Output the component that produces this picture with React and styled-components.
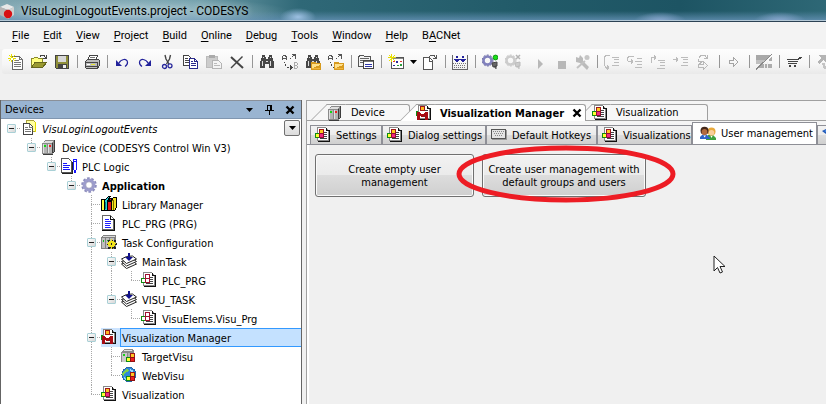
import React, { useState } from 'react'
import styled, { createGlobalStyle } from 'styled-components'

const GlobalStyle = createGlobalStyle`
  * {
    box-sizing: border-box;
  }

  body {
    margin: 0;
    background: #f0f0f0;
    color: #000;
    font-family: 'DejaVu Sans Condensed', 'DejaVu Sans', sans-serif;
    font-size: 11px;
    overflow: hidden;
  }

  button {
    margin: 0;
    padding: 0;
    border: none;
    background: none;
    color: inherit;
    font: inherit;
  }
`

const StyledWindow = styled.div`
  display: flex;
  flex-direction: column;
  min-height: 100vh;
`

const StyledTitleBar = styled.header`
  display: flex;
  align-items: center;
  gap: 5px;
  height: 22px;
  border-bottom: 1px solid #2c4254;
  box-shadow: inset 0 -1px #b4c8d6;
  font-family: Roboto, 'Open Sans', sans-serif;
  font-size: 12px;
  text-shadow: 0 0 6px rgba(255, 255, 255, 0.5);
  background:
    radial-gradient(ellipse 18px 9px at 298px 17px, #9dc0e2, transparent),
    radial-gradient(ellipse 26px 9px at 660px 21px, #8ba9d0, transparent),
    radial-gradient(ellipse 26px 9px at 780px 21px, #8ba9d0, transparent),
    radial-gradient(ellipse 160px 16px at 130px 12px, rgba(190, 214, 222, 0.7), transparent),
    linear-gradient(to bottom, transparent 11px, rgba(100, 145, 180, 0.8) 20px),
    linear-gradient(to right, #7fa5b0, #6d9ca8 200px, #2f6877 300px, #225b69 520px, #1d5463 680px, #2e6876);
`

const StyledMenu = styled.nav`
  display: flex;
  gap: 14px;
  height: 27px;
  padding-left: 12px;
  align-items: center;
  background: #f3f3f3;
  font-family: Roboto, 'Open Sans', sans-serif;
  font-size: 11px;
`

const StyledAccessKey = styled.u`
  text-decoration-thickness: 1px;
  text-underline-offset: 2px;
  text-decoration-skip-ink: none;
`

const StyledToolbar = styled.div`
  display: flex;
  align-items: center;
  height: 25px;
  margin-left: 2px;
  padding-left: 6px;
  border-radius: 3px 0 0 3px;
  background: linear-gradient(to bottom, #fdfdfd, #f6f6f6 60%, #e9e9e9);
  overflow: hidden;
`

const StyledTool = styled.button`
  display: flex;
  flex: none;
  align-items: center;
  gap: 6px;
  width: ${({ $split }) => ($split ? '34px' : '23px')};
  height: 16px;
`

const StyledSeparator = styled.i`
  flex: none;
  width: 7px;
  height: 13px;
  border-left: 1px solid #969696;
`

const StyledWorkspace = styled.main`
  display: flex;
  flex: 1;
  gap: 4px;
  padding-top: 26px;
`

const StyledDevices = styled.aside`
  position: relative;
  flex: 0 0 302px;
  border: solid #646464;
  border-width: 0 1px;
  background: #fff;
`

const StyledDevicesHeader = styled.div`
  display: flex;
  align-items: center;
  height: 19px;
  padding: 0 6px 0 4px;
  border-top: 1px solid #8a9099;
  border-bottom: 1px solid #8096b0;
  background: #99b4d1;

  h2 {
    flex: 1;
    margin: 0;
    font-size: 11px;
    font-weight: normal;
  }
`

const StyledHeaderButton = styled.button`
  display: flex;
  justify-content: center;
  width: 20px;

  &:last-child {
    width: 10px;
    margin-left: 6px;
  }
`

const StyledFilterButton = styled.button`
  position: absolute;
  top: 20px;
  right: 1px;
  display: flex;
  align-items: center;
  justify-content: center;
  width: 16px;
  height: 16px;
  border: 1px solid #707070;
  border-radius: 2px;
  background: linear-gradient(#f4f4f4, #dcdcdc);
`

const StyledTreeRow = styled.div`
  display: flex;
  height: 19px;
`

const dotsY = 'repeating-linear-gradient(to bottom, #a8a8a8 0 1px, transparent 1px 2px)'
const dotsX = 'repeating-linear-gradient(to right, #a8a8a8 0 1px, transparent 1px 2px)'

const lines = {
  none: 'none',
  pass: `${dotsY} 10px 0 / 1px 100% no-repeat`,
  root: `${dotsX} 10px 9px / 10px 1px no-repeat`,
  last: `${dotsY} 10px 0 / 1px 10px no-repeat, ${dotsX} 10px 9px / 10px 1px no-repeat`,
  tee: `${dotsY} 10px 0 / 1px 100% no-repeat, ${dotsX} 10px 9px / 10px 1px no-repeat`,
}

const StyledGuide = styled.div`
  display: flex;
  flex: none;
  width: 20px;
  padding: 5px 0 0 6px;
  background: ${({ $line }) => lines[$line]};
`

const StyledExpander = styled.button`
  width: 9px;
  height: 9px;
  border: 1px solid #a9d0d6;
  border-radius: 1px;
  background: linear-gradient(#222, #222) center / 5px 1px no-repeat,
    linear-gradient(135deg, #fff, #d6d6d6);
`

const StyledTreeIcon = styled.div`
  flex: none;
  width: 19px;
  padding-top: 1px;
  background: ${({ $selected }) => ($selected ? '#cce4ff' : 'none')};
`

const StyledTreeLabel = styled.div`
  flex: 1;
  padding-left: 1px;
  border: 1px solid ${({ $selected }) => ($selected ? '#3399ff' : 'transparent')};
  border-right: none;
  background: ${({ $selected }) => ($selected ? '#c4e1ff' : 'none')};
  font-weight: ${({ $bold }) => ($bold ? 'bold' : 'normal')};
  font-style: ${({ $italic }) => ($italic ? 'italic' : 'normal')};
  line-height: 19px;
  white-space: nowrap;
`

const StyledEditor = styled.section`
  position: relative;
  display: flex;
  flex: 1;
  flex-direction: column;
  min-width: 0;
  border: solid #a0a0a0;
  border-width: 1px 0 0 1px;
`

const StyledDocTabs = styled.div`
  display: flex;
  flex: none;
  gap: 6px;
  height: 20px;
  padding: 3px 0 0 20px;
  background: linear-gradient(#a0a0a0, #a0a0a0) bottom / 100% 1px no-repeat, #f5f5f5;
`

const StyledDocTab = styled.button`
  position: relative;
  z-index: ${({ $active }) => ($active ? 2 : 1)};
  display: flex;
  align-items: center;
  gap: 8px;
  width: ${({ $width }) => $width}px;
  height: ${({ $active }) => ($active ? '17px' : '16px')};
  padding-right: 4px;
  border: solid #a0a0a0;
  border-width: 1px 1px 0 0;
  border-radius: 0 3px 0 0;
  background: ${({ $active }) => ($active ? '#fff' : '#f7f7f7')};
  font-weight: ${({ $active }) => ($active ? 'bold' : 'normal')};
  white-space: nowrap;

  &::before {
    content: '';
    position: absolute;
    z-index: -1;
    top: -1px;
    bottom: 0;
    left: -8px;
    width: 18px;
    border: solid #a0a0a0;
    border-width: 1px 0 0 1px;
    background: inherit;
    transform: skewX(-45deg);
  }

  svg {
    flex: none;
  }
`

const StyledDocLabel = styled.span`
  flex: 1;
  text-align: left;
`

const StyledPageTabs = styled.div`
  display: flex;
  flex: none;
  align-items: flex-end;
  height: 24px;
  padding-left: 3px;
  border-bottom: 1px solid #8e8f96;
  background: #f5f5f5;
  overflow: hidden;
`

const StyledPageTab = styled.button`
  display: flex;
  flex: none;
  align-items: center;
  gap: 5px;
  width: ${({ $width }) => $width}px;
  height: ${({ $active }) => ($active ? '22px' : '19px')};
  padding-left: ${({ $active }) => ($active ? '7px' : '4px')};
  border: solid #8e8f96;
  border-width: 1px 1px 0;
  background: ${({ $active }) =>
    $active ? '#fff' : 'linear-gradient(#f2f2f2, #ebebeb 50%, #dcdcdc 51%, #cfcfcf)'};
  white-space: nowrap;
`

const StyledPage = styled.div`
  display: flex;
  flex: 1;
  align-items: flex-start;
  gap: 8px;
  padding: 9px 6px;
  border-left: 2px solid #fff;
`

const StyledAction = styled.button`
  width: ${({ $width }) => $width}px;
  height: 43px;
  padding: 0 4px;
  border: 1px solid #707070;
  border-radius: 3px;
  box-shadow: inset 0 0 0 1px #fafafa;
  background: linear-gradient(#f2f2f2, #ebebeb 48%, #dddddd 49%, #cfcfcf);
  line-height: 13px;
`

const StyledHighlighted = styled.div`
  position: relative;

  > svg {
    position: absolute;
    top: -9px;
    left: -26px;
    pointer-events: none;
  }
`

const StyledPointer = styled.svg`
  position: absolute;
  top: 154px;
  left: 406px;
`

const Icon = ({ children, smooth, size = 16 }) => (
  <svg
    width={size}
    height={size}
    viewBox={`0 0 ${size} ${size}`}
    fill="none"
    shapeRendering={smooth ? 'auto' : 'crispEdges'}
    aria-hidden="true"
  >
    {children}
  </svg>
)

const Caret = () => (
  <svg width="7" height="4" viewBox="0 0 7 4" aria-hidden="true">
    <path d="M0 0h7L3.500 4z" fill="#000" />
  </svg>
)

const Cross = () => (
  <svg width="10" height="10" viewBox="0 0 10 10" aria-hidden="true">
    <path d="M1.500 1.500l7 7M8.500 1.500l-7 7" stroke="#000" strokeWidth="2.400" />
  </svg>
)

const Pin = () => (
  <svg width="9" height="11" viewBox="0 0 9 11" shapeRendering="crispEdges" aria-hidden="true">
    <path d="M2 1.500h5M2.500 1v6M6.500 1v6M5.500 1v6M0 6.500h9M4.500 7v4" stroke="#000" fill="none" />
  </svg>
)

/* ---------- toolbar icons ---------- */

const NewIcon = () => (
  <Icon>
    <path d="M4.500 2.500h7l3 3v10h-10z" fill="#fff" stroke="#666" />
    <path d="M11.500 2.500v3h3M6 6.500h5M6 8.500h7M6 10.500h7M6 12.500h7" stroke="#777" />
    <path d="M3.500 0v8M0 4.500h8M1 1l6 6M7 1L1 7" stroke="#e8e000" />
    <path d="M3 4h2v2H3z" fill="#fff" />
  </Icon>
)
const OpenIcon = () => (
  <Icon>
    <path d="M.5 13.500v-9h2l1-1h3l1 1h4v4h-7z" fill="#ffff80" stroke="#8a8a2a" />
    <path d="M.5 13.500l3.500-5h11.500l-4 5z" fill="#9a9a30" stroke="#66661e" />
    <path d="M9 2.500l1-1h3l2 3M15.500 1v4M12 4.500h4" stroke="#444" />
  </Icon>
)
const SaveIcon = () => (
  <Icon>
    <path d="M1.500 1.500h13v13h-12l-1-1z" fill="#8f8f3a" stroke="#444" />
    <path d="M4 2h8v6H4z" fill="#d8d8d8" />
    <path d="M4 9.500h9v5H4z" fill="#444" />
    <path d="M9 11h3v3H9z" fill="#eee" />
  </Icon>
)
const PrintIcon = () => (
  <Icon>
    <path d="M5.500 1.500h8l-2 5h-8z" fill="#fff" stroke="#444" />
    <path d="M6 3.500h5M5 5.500h5" stroke="#777" />
    <path d="M1.500 7.500l2-2h11l1 1v5l-2 3h-11l-1-1z" fill="#bbb" stroke="#444" />
    <path d="M1 8.500h12M2 12.500h11M13.500 8v6" stroke="#444" />
    <path d="M7 10h4v1H7z" fill="#e5e532" />
    <path d="M3 10h3v1H3z" fill="#fff" />
  </Icon>
)
const UndoIcon = () => (
  <Icon smooth>
    <path d="M2 6v6h6z" fill="#23239b" />
    <path d="M5 9C7 5 13 4 13.500 8c.2 2-1 3.500-2.500 4.500" stroke="#23239b" strokeWidth="1.200" />
  </Icon>
)
const RedoIcon = () => (
  <Icon smooth>
    <path d="M14 6v6H8z" fill="#23239b" />
    <path d="M11 9C9 5 3 4 2.500 8c-.2 2 1 3.500 2.500 4.500" stroke="#23239b" strokeWidth="1.200" />
  </Icon>
)
const CutIcon = () => (
  <Icon smooth>
    <path d="M5 1l1 4 3 5M10.500 1l-1 4-3 5" stroke="#444" strokeWidth="1.400" />
    <circle cx="4.500" cy="12.500" r="2" stroke="#2a2a9c" strokeWidth="1.300" />
    <circle cx="10" cy="11.800" r="2" stroke="#2a2a9c" strokeWidth="1.300" />
  </Icon>
)
const CopyIcon = () => (
  <Icon>
    <path d="M.5 1.500h5l3 3v7h-8z" fill="#fff" stroke="#444" />
    <path d="M2 4.500h3M2 6.500h4M2 8.500h4" stroke="#444" />
    <path d="M6.500 4.500h5l3 3v7h-8z" fill="#fff" stroke="#2a2a8c" />
    <path d="M11.500 4.500v3h3M8 7.500h2M8 9.500h5M8 11.500h5" stroke="#2a2a8c" />
  </Icon>
)
const PasteIcon = () => (
  <Icon>
    <path d="M.5 2.500h11v11H.5z" fill="#ccc" stroke="#bbb" />
    <path d="M3 1h6v3H3z" fill="#aaa" />
    <path d="M6.500 6.500h6l3 3v5h-9z" fill="#f4f4f4" stroke="#b4b4b4" />
    <path d="M8 9.500h3M8 11.500h6" stroke="#bbb" />
  </Icon>
)
const DeleteIcon = () => (
  <Icon smooth>
    <path d="M2 3l12 11" stroke="#444" strokeWidth="2" />
    <path d="M13.500 2.500L2 14" stroke="#444" strokeWidth="1.400" />
  </Icon>
)
const Binoculars = () => (
  <>
    <path d="M3 1h3v2h1v2h2V3h1V1h3v2l2 5v6h-5v-4H6v4H1V8l2-5z" fill="#474747" />
    <path d="M4 3h1v1H4zM11 3h1v1h-1zM3 7h1v5H3zM11 7h1v5h-1zM7 7h2v1H7z" fill="#ddd" />
  </>
)
const SmallFolder = () => (
  <>
    <path d="M6 8h4l1 1h5v7H6z" fill="#d79a1e" />
    <path d="M7 10h8v1l-7 3H7z" fill="#ffe08a" />
    <path d="M7 14h8v1H7z" fill="#f2b63c" />
  </>
)
const FindIcon = () => (
  <Icon>
    <Binoculars />
  </Icon>
)
const FindFolderIcon = () => (
  <Icon>
    <Binoculars />
    <SmallFolder />
  </Icon>
)
const Swap = () => (
  <>
    <path d="M.5 6V3l1.500-2h1l1.500 2v3M1 4.500h3" stroke="#555" />
    <path d="M8 4.500h1M10 2.500h1M11 1.500h2v3M9.500 0h4" stroke="#555" />
    <path d="M2.500 8v1M3.500 10v2M5 13.500h2M8 11v5M9 12v3M10 13v1" stroke="#444" />
  </>
)
const ReplaceIcon = () => (
  <Icon>
    <Swap />
    <path d="M12.500 8v7M12 8.500h3M12 11.500h3M12 14.500h3M15.500 9v2M15.500 12v2" stroke="#aaa" />
  </Icon>
)
const ReplaceFolderIcon = () => (
  <Icon>
    <Swap />
    <SmallFolder />
  </Icon>
)
const PropertiesIcon = () => (
  <Icon>
    <path d="M.5 12.500v-10l2-1h3l1 1h6v10z" fill="#f4f4f4" stroke="#555" />
    <path d="M2 4.500h9M2 6.500h3M2 8.500h3" stroke="#666" />
    <path d="M5.500 6.500h10v8h-10z" fill="#fff" stroke="#444" />
    <path d="M6 7.500h9" stroke="#777" />
    <path d="M7 10.500h7M7 12.500h7" stroke="#2f36a8" />
  </Icon>
)
const NewTableIcon = () => (
  <Icon>
    <path d="M3.500 3.500h12v11h-12z" fill="#fff" stroke="#555" />
    <path d="M4 4.500h11" stroke="#888" />
    <path d="M5 7h2v1H5zM12 7h2v1h-2z" fill="#d33" />
    <path d="M8 7h2v2H8zM5 11h2v1H5z" fill="#2a2a9c" />
    <path d="M9 11h2v1H9zM12 10h2v2h-2z" fill="#2a9c3a" />
    <path d="M3.500 0v8M0 3.500h8M1 1l6 6M7 1L1 7" stroke="#e8e000" />
  </Icon>
)
const ExportIcon = () => (
  <Icon>
    <path d="M1.500 3.500h6l3 3v9h-9z" fill="#fff" stroke="#555" />
    <path d="M7.500 4v3h3M7 2.500l2-1h3l2 3M14.500 1v4M11 4.500h4" stroke="#555" />
  </Icon>
)
const BuildIcon = () => (
  <Icon>
    <path d="M.5 1v14.500h15V1" stroke="#666" />
    <path d="M1 9.500h14M2 11.500h12M2 13.500h12" stroke="#777" strokeDasharray="1 1" />
    <path d="M5 2v5M11 2v5" stroke="#23239b" strokeWidth="2" strokeDasharray="2 1" />
    <path d="M2 5h6L5 9zM8 5h6l-3 4z" fill="#23239b" />
  </Icon>
)
const LoginIcon = ({ disabled }) => (
  <Icon smooth>
    <circle cx="5.500" cy="6.500" r="4" stroke={disabled ? '#ccc' : '#8181bd'} strokeWidth="2.600" />
    <circle cx="5.500" cy="6.500" r="5.500" stroke={disabled ? '#c4c4c4' : '#66669f'} strokeDasharray="2 1.500" />
    <path d="M10 9l5-1v4l-4 1zM12 13l2-1v3" fill={disabled ? '#ccc' : '#666'} stroke={disabled ? '#bbb' : '#444'} />
    {disabled ? (
      <path d="M11 1l4 4M15 1l-4 4" stroke="#b4b4b4" strokeWidth="1.500" />
    ) : (
      <circle cx="13.500" cy="3.500" r="2.400" fill="#16df16" stroke="#149414" />
    )}
  </Icon>
)
const StartIcon = () => (
  <Icon smooth>
    <path d="M10 5v10l5-5z" fill="#b8b8b8" />
  </Icon>
)
const StopIcon = () => (
  <Icon>
    <path d="M7 7h8v8H7z" fill="#b8b8b8" />
  </Icon>
)
const WrenchIcon = () => (
  <Icon smooth>
    <path d="M2 3l3 1 1-3 3 3v3l6 6-2 3-7-7-4-1z" fill="#bbb" />
    <circle cx="13" cy="3.500" r="2.500" fill="#c6c6c6" />
    <path d="M11 7l-8 7" stroke="#c2c2c2" strokeWidth="2" />
  </Icon>
)
const StepOverIcon = () => (
  <Icon>
    <path d="M6 1.500H1.500l-1 2v8l2 2.500h2M3.500 11v5M4.500 12v3M8 3.500h7M10 5.500h5M10 8.500h5M8 11.500h7" stroke="#bcbcbc" />
  </Icon>
)
const StepInIcon = () => (
  <Icon>
    <path d="M7 2.500H1.500l-1 2v2l1 1h4M4.500 5v5M5.500 6v3M10 4.500h5M8 7.500h7M10 10.500h5M8 13.500h7" stroke="#bcbcbc" />
  </Icon>
)
const StepOutIcon = () => (
  <Icon>
    <path d="M2 8.500l-1-1v-3l1-1h4M4.500 1v5M5.500 2v3M8 6.500h7M10 8.500h5M10 11.500h5M7 14.500h8" stroke="#bcbcbc" />
  </Icon>
)
const RunToIcon = () => (
  <Icon>
    <path d="M0 5.500h5M3.500 3v5M4.500 4v3M8 3.500h7M10 5.500h5M10 8.500h5M8 11.500h7" stroke="#bcbcbc" />
  </Icon>
)
const SetNextIcon = () => (
  <Icon>
    <path d="M3 3.500l2-2h4l2 3M11.500 1v4M8 4.500h4M2.500 5v2h4l-3 3M2.500 10.500h5v-3l4 4-4 4v-2h-5z" stroke="#b8b8b8" />
  </Icon>
)
const ArrowIcon = () => (
  <Icon>
    <path d="M3.500 6.500h4v-3l4.500 4.500-4.500 4.500v-3h-4z" stroke="#a4a4a4" />
  </Icon>
)
const FlowIcon = () => (
  <Icon>
    <path d="M0 1h15L10 6H0z" fill="#a8a8a8" />
    <path d="M0 6h10l-4 4H0z" fill="#c0c0c0" />
    <path d="M3 14l3-4h10v4zM13 5l3-2v4h-3z" fill="#acacac" />
    <path d="M0 15.500L15.500.5" stroke="#888" />
    <path d="M8.500 9v5M11.500 8v6" stroke="#eee" />
  </Icon>
)
const CartIcon = () => (
  <Icon>
    <path d="M13 3.500h3M12.500 4v2M1 5.500h12M2 7.500h10M2 9.500h9" stroke="#444" />
    <path d="M3 11h2v2H3zM8 11h2v2H8zM13 3h2v2h-2z" fill="#444" />
  </Icon>
)
const MoveIcon = () => (
  <Icon>
    <path d="M2 1h8v8L7 6l-4 4-2-2 4-4z" fill="#b4b4b4" />
    <path d="M6 9h3v3h3v3H8z" fill="#c4c4c4" />
  </Icon>
)

/* ---------- tree and tab icons ---------- */

const Sheet = () => (
  <>
    <path d="M2 0h9v1h1v1h1v1h1v11H2z" fill="#888" />
    <path d="M3 1h8v2h2v10H3z" fill="#fff" />
    <path d="M3 14h12v1H3zM14 3h1v12h-1zM11 1h1v2h2v1h-3z" fill="#111" />
    <path d="M9 5.500h3M9 7.500h3M9 9.500h3M5 11.500h7" stroke="#444" />
  </>
)
const ProjectIcon = () => (
  <Icon>
    <path d="M5.500.5h7l2 2v9h-9z" fill="#ffffa0" stroke="#a8a03c" />
    <path d="M14 2h1v10h-1z" fill="#e6dc00" />
    <path d="M2.500 3.500h6l3 3v8h-9z" fill="#fff" stroke="#444" />
    <path d="M8.500 4v3h3M4 7.500h3M4 9.500h6M4 11.500h6" stroke="#777" />
  </Icon>
)
const DeviceIcon = () => (
  <Icon>
    <path d="M1 4h1V3h1V2h1V1h10v12h-1v1h-1v1H1z" fill="#8a8a8a" />
    <path d="M4 2h8v1h-1v1H2V3h2z" fill="#dedede" />
    <path d="M2 5h4v9H2zM7 5h4v9H7z" fill="#b4b4b4" />
    <path d="M2 5h1v9H2zM7 5h1v9H7z" fill="#e2e2e2" />
    <path d="M3 6h2v2H3z" fill="#10d810" />
    <path d="M8 6h2v2H8z" fill="#f02020" />
    <path d="M13 1h1v12h-1zM12 13h1v1h-1zM2 15h10v1H2zM11 4h1v10h-1z" fill="#3c3c3c" />
  </Icon>
)
const LogicIcon = () => (
  <Icon>
    <path d="M.5.500h7l3 3v11H.5z" fill="#fff" stroke="#555" />
    <path d="M1 15.500h10.500V4" stroke="#222" />
    <path d="M2 5.500h4M2 7.500h7M2 9.500h6M2 11.500h7" stroke="#1818ff" />
    <path d="M12.500 1.500h3v9l-1.500 4-1.500-4zM12 3.500h4" fill="#fff" stroke="#1818ff" />
  </Icon>
)
const GearIcon = () => (
  <Icon smooth>
    <circle cx="8" cy="8" r="6.800" stroke="#8c8cbc" strokeWidth="2" strokeDasharray="2.600 1.670" />
    <circle cx="8" cy="8" r="4.800" stroke="#9c9ccc" strokeWidth="3.200" />
    <circle cx="8" cy="8" r="3.300" fill="#fff" stroke="#77779f" strokeWidth=".6" />
  </Icon>
)
const LibraryIcon = () => (
  <Icon>
    <path d="M.5 3.500h3v11h-3z" fill="#ffff40" stroke="#000" />
    <path d="M3.500 4.500l4-4h2l-3 4v10h-3z" fill="#28d0d8" stroke="#000" />
    <path d="M6.500 5.500h4v9h-4zM7 4l3-2 1 3z" fill="#e01818" stroke="#000" />
    <path d="M10.500 4.500l2-3h3v10l-2 3h-3z" fill="#f2e020" stroke="#000" />
    <path d="M12.500 5v9M11 4.500h2" stroke="#7a6c00" />
    <path d="M4 6h1v7H4z" fill="#00888c" />
  </Icon>
)
const ProgramIcon = () => (
  <Icon>
    <path d="M1.500.5h8l3 3v11h-11z" fill="#fff" stroke="#666" />
    <path d="M1 15.500h12.500V4M9.500 1v3h3" stroke="#111" />
    <path d="M4 4.500h4M4 6.500h6M4 8.500h6M4 10.500h5M4 12.500h6" stroke="#2020ff" />
  </Icon>
)
const TaskConfigIcon = () => (
  <Icon>
    <path d="M0 3h1V2h1V1h13v12h-1v2H0z" fill="#808080" />
    <path d="M2 2h12v1H1z" fill="#dcdcdc" />
    <path d="M1 4h3v10H1zM5 4h3v10H5zM9 4h4v6H9z" fill="#bebebe" />
    <path d="M2 6h1v2H2zM6 6h1v1H6z" fill="#18c018" />
    <path d="M10 6h2v9h-2zM6 9h10v2H6zM7 6h2v1h4V6h2v2h-1v5h1v2h-2v-1H9v1H7v-2h1V8H7z" fill="#222" />
    <path d="M10 5h1v2h2v1h1v1h1v1h-1v2h-1v1h-2v2h-1v-2H8v-1H7v-2H6V9h1V8h1V7h2z" fill="#f2e41c" />
    <path d="M10 9h1v2h-1z" fill="#222" />
  </Icon>
)
const TaskIcon = () => (
  <Icon smooth>
    <path d="M.5 11l5 4.500L15.500 11l-4-3z" fill="#fff" stroke="#222" />
    <path d="M.5 8.500l5 4.500 10-4.500-4-3z" fill="#fff" stroke="#222" />
    <path d="M.5 6l5 4.500L15.500 6l-4-3-6 .5z" fill="#fff" stroke="#222" />
    <path d="M7 0h2v4h3L8 8 4 4h3z" fill="#10108c" />
  </Icon>
)
const PouIcon = () => (
  <Icon>
    <Sheet />
    <path d="M.5 6.500h4v4h-4z" fill="#fff" stroke="#108c10" />
    <path d="M4.500 2.500h4v4h-4zM4.500 6.500h4v4h-4z" fill="#fff" stroke="#a01030" />
  </Icon>
)
const VisuBlocks = () => (
  <>
    <path d="M.5 6.500h4v4h-4z" fill="#ffff30" stroke="#108c10" />
    <path d="M4.500 2.500h4v4h-4z" fill="#ffc820" stroke="#a01818" />
    <path d="M4.500 6.500h4v4h-4z" fill="#f02880" stroke="#901030" />
  </>
)
const VisuIcon = () => (
  <Icon>
    <Sheet />
    <VisuBlocks />
  </Icon>
)
const VisuManagerIcon = () => (
  <Icon>
    <Sheet />
    <path d="M4.500 1.500h4v4h-4z" fill="#ffb820" stroke="#a01818" />
    <path d="M0 6h2v1H0zM0 7h1v4H0z" fill="#108c10" />
    <path d="M1 7h3v1h1v1h3V8h1V7h3v8H9v-4H8v1H5v-1H4v4H1z" fill="#a80c14" />
  </Icon>
)
const OverlayBlocks = () => (
  <>
    <path d="M5.500 9.500h4v4h-4z" fill="#ffff30" stroke="#108c10" />
    <path d="M9.500 5.500h4v4h-4z" fill="#ffc820" stroke="#a01818" />
    <path d="M9.500 9.500h4v4h-4z" fill="#f02020" stroke="#901010" />
  </>
)
const TargetVisuIcon = () => (
  <Icon>
    <path d="M0 4h1V3h1V2h1V1h9v1h1v12H0z" fill="#8a8a8a" />
    <path d="M3 2h8v1H3z" fill="#e4e4e4" />
    <path d="M1 5h5v9H1z" fill="#cacaca" />
    <path d="M7 5h4v9H7z" fill="#b0b0b0" />
    <path d="M2 6h2v2H2z" fill="#18d018" />
    <OverlayBlocks />
  </Icon>
)
const WebVisuIcon = () => (
  <Icon>
    <circle cx="8" cy="7.500" r="7" fill="#2f86d8" stroke="#2468a8" />
    <path d="M2 5l3-3 3 1-2 2-2 1-1 3-2-1z" fill="#7cd048" />
    <path d="M9 2l4 2-2 1-2-1z" fill="#9fdcff" />
    <path d="M3 10l2 1v3l-2-2z" fill="#8fd0ff" />
    <OverlayBlocks />
  </Icon>
)
const KeyboardIcon = () => (
  <Icon>
    <path d="M.5 2.500h14v9H.5z" fill="#e4e4e4" stroke="#555" />
    <path d="M15 3v9.500H1" stroke="#999" />
    <path d="M2 4.500h11M3 6.500h10M4 8.500h7" stroke="#888" strokeDasharray="1 1" />
  </Icon>
)
const UsersIcon = () => (
  <Icon smooth>
    <path d="M6 14v-2l2-3h5l3 3v2z" fill="#3da23d" />
    <circle cx="11.500" cy="5.500" r="4" fill="#e8a93c" />
    <circle cx="11.500" cy="6.800" r="2.800" fill="#f9cf9c" />
    <path d="M0 13v-2l2-2h5l3 3v1z" fill="#2e64c8" />
    <circle cx="4.500" cy="4.800" r="4" fill="#43281a" />
    <circle cx="4.500" cy="6" r="2.900" fill="#b26b3e" />
    <path d="M3.500 9.500l1 2 1.500-2M10.500 10l1 2 1-2" fill="#fff" />
  </Icon>
)
const HelpIcon = () => (
  <Icon smooth>
    <path d="M0 4l6-3 8 3-6 6z" fill="#1d56b4" />
    <path d="M2 4l4-2 4 2-4 2z" fill="#4c8ce8" />
  </Icon>
)

const menuItems = [
  ['', 'F', 'ile'],
  ['', 'E', 'dit'],
  ['', 'V', 'iew'],
  ['', 'P', 'roject'],
  ['', 'B', 'uild'],
  ['', 'O', 'nline'],
  ['', 'D', 'ebug'],
  ['', 'T', 'ools'],
  ['', 'W', 'indow'],
  ['', 'H', 'elp'],
  ['B', 'A', 'CNet'],
]

const LogoutIcon = () => <LoginIcon disabled />

const tools = [
  [['New', NewIcon], ['Open', OpenIcon], ['Save', SaveIcon]],
  [['Print', PrintIcon]],
  [
    ['Undo', UndoIcon],
    ['Redo', RedoIcon],
    ['Cut', CutIcon],
    ['Copy', CopyIcon],
    ['Paste', PasteIcon],
    ['Delete', DeleteIcon],
  ],
  [
    ['Find', FindIcon],
    ['Replace', ReplaceIcon],
    ['Find in project', FindFolderIcon],
    ['Replace in project', ReplaceFolderIcon],
  ],
  [['Properties', PropertiesIcon]],
  [['New object', NewTableIcon, true], ['Edit object', ExportIcon]],
  [['Build', BuildIcon]],
  [
    ['Login', LoginIcon],
    ['Logout', LogoutIcon],
    ['Start', StartIcon],
    ['Stop', StopIcon],
    ['Options', WrenchIcon],
  ],
  [
    ['Step over', StepOverIcon],
    ['Step into', StepInIcon],
    ['Step out', StepOutIcon],
    ['Run to cursor', RunToIcon],
    ['Set next statement', SetNextIcon],
  ],
  [['Show next statement', ArrowIcon]],
  [['Flow control', FlowIcon]],
  [['Store', CartIcon]],
  [['Move', MoveIcon]],
]

const project = {
  label: 'VisuLoginLogoutEvents',
  icon: ProjectIcon,
  italic: true,
  children: [
    {
      label: 'Device (CODESYS Control Win V3)',
      icon: DeviceIcon,
      children: [
        {
          label: 'PLC Logic',
          icon: LogicIcon,
          children: [
            {
              label: 'Application',
              icon: GearIcon,
              bold: true,
              children: [
                { label: 'Library Manager', icon: LibraryIcon },
                { label: 'PLC_PRG (PRG)', icon: ProgramIcon },
                {
                  label: 'Task Configuration',
                  icon: TaskConfigIcon,
                  children: [
                    {
                      label: 'MainTask',
                      icon: TaskIcon,
                      children: [{ label: 'PLC_PRG', icon: PouIcon }],
                    },
                    {
                      label: 'VISU_TASK',
                      icon: TaskIcon,
                      children: [{ label: 'VisuElems.Visu_Prg', icon: PouIcon }],
                    },
                  ],
                },
                {
                  label: 'Visualization Manager',
                  icon: VisuManagerIcon,
                  children: [
                    { label: 'TargetVisu', icon: TargetVisuIcon },
                    { label: 'WebVisu', icon: WebVisuIcon },
                  ],
                },
                { label: 'Visualization', icon: VisuIcon },
              ],
            },
          ],
        },
      ],
    },
  ],
}

const TreeNode = ({ node, guides = [], line = 'root', selected, onSelect }) => {
  const [open, setOpen] = useState(true)
  const NodeIcon = node.icon
  const children = node.children || []
  const isSelected = selected === node.label
  const childGuides = [...guides, line === 'tee' ? 'pass' : 'none']

  return (
    <>
      <StyledTreeRow onClick={() => onSelect(node.label)}>
        {guides.map((guide, i) => (
          <StyledGuide key={i} $line={guide} />
        ))}
        <StyledGuide $line={line}>
          {children.length > 0 && (
            <StyledExpander aria-label={`Toggle ${node.label}`} onClick={() => setOpen(!open)} />
          )}
        </StyledGuide>
        <StyledTreeIcon $selected={isSelected}>
          <NodeIcon />
        </StyledTreeIcon>
        <StyledTreeLabel $selected={isSelected} $bold={node.bold} $italic={node.italic}>
          {node.label}
        </StyledTreeLabel>
      </StyledTreeRow>
      {open &&
        children.map((child, i) => (
          <TreeNode
            key={child.label}
            node={child}
            guides={childGuides}
            line={i === children.length - 1 ? 'last' : 'tee'}
            selected={selected}
            onSelect={onSelect}
          />
        ))}
    </>
  )
}

const App = () => {
  const [selected, setSelected] = useState('Visualization Manager')

  return (
    <StyledWindow>
      <GlobalStyle />
      <StyledTitleBar>
        <Icon smooth>
          <path d="M0 4l7-3 7 3-6 3z" fill="#e8e8e8" />
          <path d="M0 4l8 3v9l-8-4z" fill="#b8b4b4" />
          <path d="M14 4v8l-6 4V7z" fill="#cfcfcf" />
          <circle cx="8" cy="11" r="4.200" fill="#d80f14" />
        </Icon>
        VisuLoginLogoutEvents.project - CODESYS
      </StyledTitleBar>
      <StyledMenu>
        {menuItems.map(([before, key, after]) => (
          <button key={before + key + after}>
            {before}
            <StyledAccessKey>{key}</StyledAccessKey>
            {after}
          </button>
        ))}
      </StyledMenu>
      <StyledToolbar>
        {tools.map((group, i) => (
          <React.Fragment key={i}>
            {i > 0 && <StyledSeparator />}
            {group.map(([name, ToolIcon, split]) => (
              <StyledTool key={name} aria-label={name} $split={split}>
                <ToolIcon />
                {split && <Caret />}
              </StyledTool>
            ))}
          </React.Fragment>
        ))}
      </StyledToolbar>

      <StyledWorkspace>
        <StyledDevices>
          <StyledDevicesHeader>
            <h2>Devices</h2>
            <StyledHeaderButton aria-label="Window position">
              <Caret />
            </StyledHeaderButton>
            <StyledHeaderButton aria-label="Auto hide">
              <Pin />
            </StyledHeaderButton>
            <StyledHeaderButton aria-label="Close">
              <Cross />
            </StyledHeaderButton>
          </StyledDevicesHeader>
          <TreeNode node={project} selected={selected} onSelect={setSelected} />
          <StyledFilterButton aria-label="Tree options">
            <Caret />
          </StyledFilterButton>
        </StyledDevices>

        <StyledEditor>
          <StyledDocTabs>
            <StyledDocTab $width={83}>
              <DeviceIcon />
              <StyledDocLabel>Device</StyledDocLabel>
            </StyledDocTab>
            <StyledDocTab $width={170} $active>
              <VisuManagerIcon />
              <StyledDocLabel>Visualization Manager</StyledDocLabel>
              <Cross />
            </StyledDocTab>
            <StyledDocTab $width={116}>
              <VisuIcon />
              <StyledDocLabel>Visualization</StyledDocLabel>
            </StyledDocTab>
          </StyledDocTabs>
          <StyledPageTabs>
            <StyledPageTab $width={72}>
              <VisuIcon />
              Settings
            </StyledPageTab>
            <StyledPageTab $width={104}>
              <VisuIcon />
              Dialog settings
            </StyledPageTab>
            <StyledPageTab $width={111}>
              <KeyboardIcon />
              Default Hotkeys
            </StyledPageTab>
            <StyledPageTab $width={95}>
              <VisuIcon />
              Visualizations
            </StyledPageTab>
            <StyledPageTab $width={125} $active>
              <UsersIcon />
              User management
            </StyledPageTab>
            <StyledPageTab $width={104} aria-label="Font">
              <HelpIcon />
            </StyledPageTab>
          </StyledPageTabs>
          <StyledPage>
            <StyledAction $width={159}>
              Create empty user
              <br />
              management
            </StyledAction>
            <StyledHighlighted>
              <StyledAction $width={164}>
                Create user management with
                <br />
                default groups and users
              </StyledAction>
              <svg width="220" height="58" viewBox="0 0 220 58" fill="none" aria-hidden="true">
                <ellipse cx="110" cy="29" rx="107" ry="26" stroke="#ed1c24" strokeWidth="5" />
              </svg>
            </StyledHighlighted>
          </StyledPage>
          <StyledPointer width="13" height="20" viewBox="0 0 13 20" aria-hidden="true">
            <path d="M1 1v15l3.500-3.500L7 18l2.500-1L7 11.500h5z" fill="#fff" stroke="#222" />
          </StyledPointer>
        </StyledEditor>
      </StyledWorkspace>
    </StyledWindow>
  )
}

export default App
